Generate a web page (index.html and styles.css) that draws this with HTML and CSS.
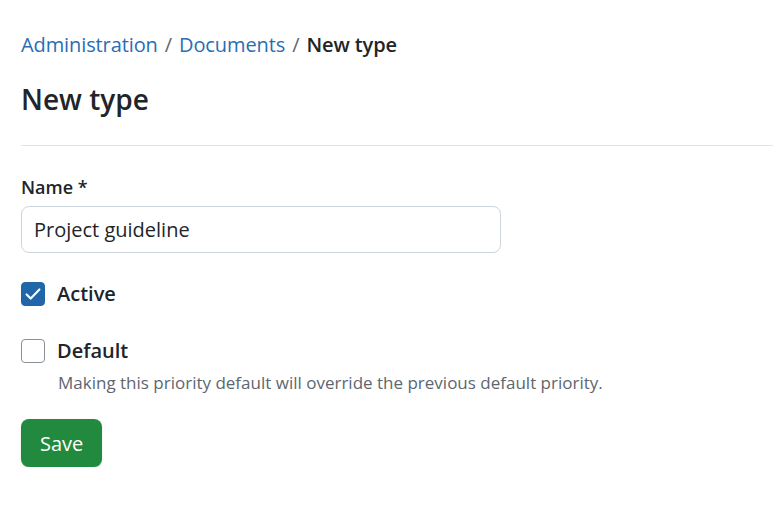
FILE: index.html
```html
<!DOCTYPE html>
<html lang="en">
<head>
<meta charset="utf-8">
<title>New type</title>
<link rel="stylesheet" href="styles.css">
</head>
<body>
<main class="page">
  <nav class="breadcrumb">
    <a href="#">Administration</a><span class="sep">/</span><a href="#">Documents</a><span class="sep">/</span><span class="current">New type</span>
  </nav>
  <h1 class="title">New type</h1>
  <hr class="divider">
  <form class="form">
    <div class="field">
      <label class="label" for="name">Name *</label>
      <input class="input" id="name" type="text" value="Project guideline">
    </div>
    <div class="check">
      <span class="box checked">
        <svg viewBox="0 0 24 24" width="24" height="24"><path d="M5 12.5l4.5 4.5 9.5-10" fill="none" stroke="#fff" stroke-width="2.3" stroke-linecap="round" stroke-linejoin="round"/></svg>
      </span>
      <span class="check-label">Active</span>
    </div>
    <div class="check check-default">
      <span class="box"></span>
      <span class="check-label">Default</span>
    </div>
    <p class="help">Making this priority default will override the previous default priority.</p>
    <div><button class="btn" type="button">Save</button></div>
  </form>
</main>
</body>
</html>
```
FILE: styles.css
```css
* { box-sizing: border-box; }
body {
  margin: 0;
  font-family: "Open Sans", "Noto Sans", sans-serif;
  color: #212529;
  background: #fff;
  overflow: hidden;
}
.page {
  padding: 31px 0 0 21px;
}
.breadcrumb {
  font-size: 20px;
  line-height: 28px;
  display: flex;
  align-items: baseline;
  letter-spacing: -0.1px;
}
.breadcrumb a {
  color: #2a6db3;
  text-decoration: none;
}
.sep {
  color: #5f666d;
  margin: 0 7px;
}
.current {
  font-weight: 600;
  color: #212529;
}
.title {
  margin: 22px 0 0 0;
  font-size: 28px;
  line-height: 36px;
  font-weight: 600;
}
.divider {
  border: 0;
  border-top: 1px solid #e1e3e5;
  margin: 28px 0 0 0;
}
.form {
  display: flex;
  flex-direction: column;
  padding-top: 29px;
}
.field {
  display: flex;
  flex-direction: column;
}
.label {
  font-size: 18px;
  font-weight: 600;
  line-height: 24px;
  margin-bottom: 7px;
}
.input {
  width: 480px;
  height: 47px;
  border: 1px solid #ccd4de;
  border-radius: 8px;
  padding: 0 12px;
  font-family: inherit;
  font-size: 20px;
  color: #212529;
}
.check {
  display: flex;
  align-items: center;
  gap: 12px;
  margin-top: 29px;
}
.check-default {
  margin-top: 33px;
}
.box {
  width: 24px;
  height: 24px;
  flex: 0 0 24px;
  border: 1px solid #8b9096;
  border-radius: 4px;
  display: inline-flex;
  align-items: center;
  justify-content: center;
  background: #fff;
}
.box.checked {
  background: #2166a8;
  border-color: #2166a8;
}
.check-label {
  font-size: 20px;
  font-weight: 600;
  line-height: 24px;
}
.help {
  margin: 8px 0 0 37px;
  font-size: 17px;
  line-height: 24px;
  color: #5e6670;
}
.btn {
  margin-top: 24px;
  background: #228a3e;
  color: #fff;
  border: 0;
  border-radius: 8px;
  height: 48px;
  padding: 0 19px;
  font-family: inherit;
  font-size: 20px;
  box-shadow: 0 1px 2px rgba(0,0,0,0.15);
}
```
